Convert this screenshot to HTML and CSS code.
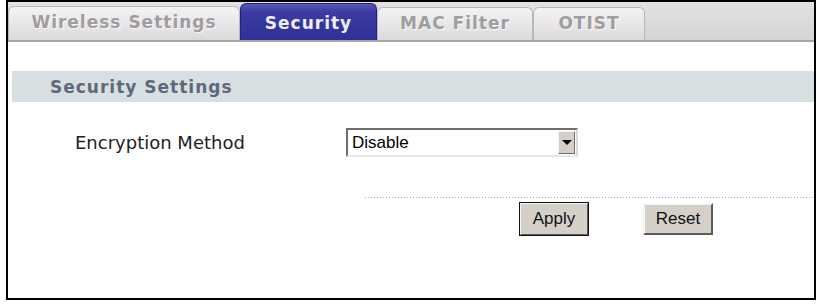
FILE: index.html
```html
<!DOCTYPE html>
<html lang="en">
<head>
    <meta charset="UTF-8">
    <title>Wireless LAN - Security</title>
    <link rel="stylesheet" href="styles.css">
</head>
<body>
    <div class="frame">
        <!-- Tab strip -->
        <div class="tabs">
            <div class="tab tab-wireless">Wireless Settings</div>
            <div class="tab tab-security active">Security</div>
            <div class="tab tab-mac">MAC Filter</div>
            <div class="tab tab-otist">OTIST</div>
        </div>

        <!-- Settings -->
        <div class="content">
            <div class="section-title">Security Settings</div>
            <div class="row">
                <label for="method">Encryption Method</label>
                <div class="select-box">
                    <select id="method">
                        <option>Disable</option>
                        <option>WEP</option>
                        <option>WPA-PSK</option>
                        <option>WPA</option>
                    </select>
                    <span class="select-arrow"></span>
                </div>
            </div>
            <div class="actions">
                <button type="button" class="btn btn-default">Apply</button>
                <button type="button" class="btn">Reset</button>
            </div>
        </div>
    </div>
</body>
</html>
```

FILE: styles.css
```css
body {
    margin: 0;
    background: #fff;
    font-family: "DejaVu Sans", Verdana, sans-serif;
}
.frame {
    margin-left: 6px;
    width: 810px;
    height: 300px;
    border: 2px solid #000;
    box-sizing: border-box;
    background: #fff;
}
.tabs {
    display: flex;
    align-items: flex-end;
    height: 38px;
    background: linear-gradient(#e4e1e4, #d6d3d6);
    border-bottom: 2px solid #a9a6a9;
}
.tab {
    box-sizing: border-box;
    height: 33px;
    border: 1px solid #bab7ba;
    border-bottom: none;
    border-radius: 6px 6px 0 0;
    background: linear-gradient(#f4f2f4, #e6e4e6 60%, #dcd9dc);
    color: #9f9d9f;
    font-weight: bold;
    font-size: 17px;
    letter-spacing: 1px;
    text-align: center;
    line-height: 31px;
    text-shadow: 1px 1px 0 #f8f8f8;
}
.tab-wireless { width: 232px; height: 34px; }
.tab-security { width: 137px; }
.tab-mac { width: 156px; }
.tab-otist { width: 112px; }
.tab.active {
    height: 37px;
    background: linear-gradient(#5656b4, #3a3aa2 25%, #30309a);
    border-color: #23237a;
    color: #eeeef8;
    text-shadow: none;
    line-height: 38px;
}
.content {
    padding: 29px 0 0 4px;
}
.section-title {
    height: 31px;
    line-height: 32px;
    padding-left: 38px;
    background: #d8dfe2;
    color: #5d6a7c;
    font-weight: bold;
    font-size: 17px;
    letter-spacing: 1px;
}
.row {
    display: flex;
    align-items: center;
    margin-top: 26px;
    padding-left: 63px;
}
.row label {
    width: 271px;
    font-size: 18px;
    color: #222;
}
.select-box {
    display: flex;
    box-sizing: border-box;
    width: 232px;
    height: 29px;
    border-top: 2px solid #6e6e6e;
    border-left: 2px solid #6e6e6e;
    border-right: 2px solid #d8d8d8;
    border-bottom: 2px solid #e8e8e8;
    background: #fff;
}
.select-box select {
    flex: 1;
    appearance: none;
    -webkit-appearance: none;
    border: none;
    outline: none;
    background: transparent;
    padding: 0 0 0 4px;
    font-family: "Liberation Sans", Arial, sans-serif;
    font-size: 17px;
    color: #000;
}
.select-arrow {
    box-sizing: border-box;
    width: 17px;
    margin: 1px;
    background: #d4d0c8;
    border-top: 1px solid #f4f4f4;
    border-left: 1px solid #f4f4f4;
    border-right: 1px solid #6e6e6e;
    border-bottom: 1px solid #6e6e6e;
    display: flex;
    align-items: center;
    justify-content: center;
}
.select-arrow::after {
    content: "";
    border-left: 5px solid transparent;
    border-right: 5px solid transparent;
    border-top: 5px solid #000;
}
.actions {
    display: flex;
    align-items: center;
    gap: 54px;
    margin: 40px 0 0 353px;
    padding: 5px 0 0 154px;
    background: linear-gradient(to right, #a6a6a6 1px, transparent 1px) repeat-x 0 0 / 3px 1px;
}
.btn {
    box-sizing: border-box;
    width: 70px;
    height: 32px;
    padding: 0;
    background: #d4d0c8;
    border-top: 2px solid #f6f6f6;
    border-left: 2px solid #f6f6f6;
    border-right: 2px solid #5a5a5a;
    border-bottom: 2px solid #5a5a5a;
    border-radius: 0;
    font-family: "Liberation Sans", Arial, sans-serif;
    font-size: 17px;
    color: #111;
}
.btn-default {
    height: 34px;
    outline: 1px solid #111;
    outline-offset: -1px;
}
```
